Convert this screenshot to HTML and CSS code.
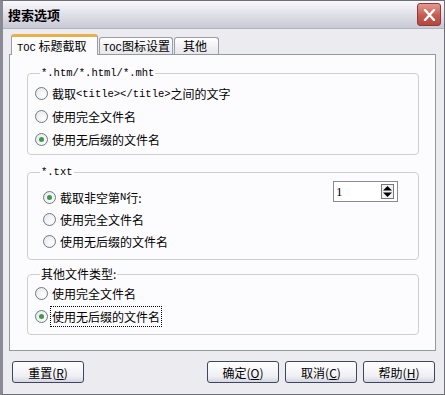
FILE: index.html
```html
<!DOCTYPE html>
<html lang="zh-CN">
<head>
    <meta charset="UTF-8">
    <title>搜索选项</title>
    <link rel="stylesheet" href="styles.css">
</head>
<body>
    <div class="window">
        <div class="titlebar">
            <span class="title">搜索选项</span>
            <span class="close">
                <svg width="13" height="12" viewBox="0 0 13 12">
                    <path d="M2 1 L11 11 M11 1 L2 11" stroke="#fff" stroke-width="2.4" stroke-linecap="round"/>
                </svg>
            </span>
        </div>
        <div class="content">
            <div class="tabs">
                <div class="tab active"><span class="en">TOC</span> 标题截取</div>
                <div class="tab t2"><span class="en">TOC</span>图标设置</div>
                <div class="tab t3">其他</div>
            </div>
            <div class="panel">
                <fieldset class="group g1">
                    <legend class="en">*.htm/*.html/*.mht</legend>
                    <div class="row"><span class="radio"></span>截取<span class="en">&lt;title&gt;&lt;/title&gt;</span>之间的文字</div>
                    <div class="row"><span class="radio"></span>使用完全文件名</div>
                    <div class="row"><span class="radio checked"></span>使用无后缀的文件名</div>
                </fieldset>
                <fieldset class="group g2">
                    <legend class="en">*.txt</legend>
                    <div class="row">
                        <span class="radio checked"></span>截取非空第<span class="en">N</span>行:
                        <span class="spin">
                            <span class="spin-val">1</span>
                            <span class="spin-btn">
                                <svg width="11" height="13" viewBox="0 0 11 13">
                                    <path d="M5.5 1 L10 5.5 L1 5.5 Z" fill="#000"/>
                                    <path d="M1 7.5 L10 7.5 L5.5 12 Z" fill="#000"/>
                                </svg>
                            </span>
                        </span>
                    </div>
                    <div class="row"><span class="radio"></span>使用完全文件名</div>
                    <div class="row"><span class="radio"></span>使用无后缀的文件名</div>
                </fieldset>
                <fieldset class="group g3">
                    <legend>其他文件类型:</legend>
                    <div class="row"><span class="radio"></span>使用完全文件名</div>
                    <div class="row"><span class="radio checked"></span><span class="focus">使用无后缀的文件名</span></div>
                </fieldset>
            </div>
            <div class="buttons">
                <button class="btn">重置(<u>R</u>)</button>
                <div class="right">
                    <button class="btn">确定(<u>O</u>)</button>
                    <button class="btn">取消(<u>C</u>)</button>
                    <button class="btn">帮助(<u>H</u>)</button>
                </div>
            </div>
        </div>
    </div>
</body>
</html>
```

FILE: styles.css
```css
body {
    margin: 0;
    font-family: "Noto Sans CJK SC", "Liberation Sans", sans-serif;
    font-size: 12px;
    color: #000;
}
.window {
    width: 445px;
    height: 395px;
    box-sizing: border-box;
    border: 1px solid #6f6f7a;
    border-left: 3px solid #8a8a96;
    background: #ecebf0;
}
.titlebar {
    height: 27px;
    display: flex;
    align-items: center;
    justify-content: space-between;
    padding: 0 3px 0 5px;
    background: linear-gradient(#fafafc, #e2e2ea 45%, #c9c9d6);
    border-bottom: 1px solid #b4b4c0;
}
.title {
    font-weight: bold;
    font-size: 13px;
}
.close {
    width: 22px;
    height: 21px;
    border: 1px solid #8c3a3a;
    border-radius: 3px;
    background: linear-gradient(#e49a90, #c65a52 55%, #b4463f);
    display: flex;
    align-items: center;
    justify-content: center;
}
.content {
    padding: 5px 8px 0 6px;
}
.en {
    font-family: "Liberation Mono", monospace;
    font-size: 10.5px;
}
.tabs {
    display: flex;
    align-items: flex-end;
    height: 20px;
    padding-left: 2px;
    gap: 1px;
}
.tab {
    box-sizing: border-box;
    height: 17px;
    border: 1px solid #9c9ca8;
    border-bottom: none;
    border-radius: 3px 3px 0 0;
    background: linear-gradient(#ffffff, #e6e6ec);
    padding: 0 5px;
    line-height: 16px;
    white-space: nowrap;
}
.tab.active {
    width: 87px;
    height: 21px;
    margin-bottom: -1px;
    background: #fcfcfe;
    border-top: 3px solid #e8b04a;
    line-height: 17px;
    position: relative;
    z-index: 1;
}
.tab.t2 {
    width: 74px;
    padding: 0 3px;
}
.tab.t3 {
    width: 45px;
    padding-left: 8px;
}
.panel {
    height: 297px;
    box-sizing: border-box;
    border: 1px solid #919b9c;
    background: #fcfcfe;
    padding: 11px 16px 0 17px;
}
.group {
    margin: 0;
    border: 1px solid #d0d0c8;
    border-radius: 4px;
    padding: 2px 8px 3px 7px;
    min-width: 0;
}
.group legend {
    padding: 0 1px;
    margin-left: 5px;
    line-height: 14px;
}
.g2 {
    margin-top: 10px;
    padding: 7px 8px 7px 7px;
}
.g2 .row {
    padding-left: 8px;
}
.g3 {
    margin-top: 7px;
    padding-top: 1px;
    padding-bottom: 6px;
}
.row {
    height: 23px;
    display: flex;
    align-items: center;
    white-space: nowrap;
}
.g2 .row {
    height: 22px;
}
.radio {
    width: 11px;
    height: 11px;
    border: 1px solid #6d7a86;
    border-radius: 50%;
    background: radial-gradient(circle at 65% 65%, #ffffff, #e4e4e8);
    margin-right: 4px;
    display: flex;
    align-items: center;
    justify-content: center;
    flex: none;
}
.radio.checked::after {
    content: "";
    width: 5px;
    height: 5px;
    border-radius: 50%;
    background: #3c9a48;
}
.focus {
    outline: 1px dotted #000;
    outline-offset: 1px;
}
.spin {
    margin-left: auto;
    margin-right: 12px;
    align-self: flex-start;
    margin-top: -5px;
    width: 65px;
    height: 21px;
    box-sizing: border-box;
    border: 1px solid #8a8a8a;
    background: #fff;
    display: flex;
    align-items: center;
    justify-content: space-between;
    padding: 0 3px 0 2px;
}
.spin-val {
    font-family: "Liberation Serif", serif;
    font-size: 13px;
}
.spin-btn {
    width: 13px;
    height: 15px;
    border: 1px solid #777;
    box-sizing: border-box;
    display: flex;
    align-items: center;
    justify-content: center;
    background: #f2f2f2;
}
.buttons {
    display: flex;
    justify-content: space-between;
    padding: 10px 1px 0 3px;
}
.right {
    display: flex;
    gap: 6px;
}
.btn {
    width: 72px;
    height: 22px;
    border: 1px solid #3c4660;
    border-radius: 3px;
    background: linear-gradient(#ffffff, #f0f0f4 70%, #d6d6e2);
    font-family: "Noto Sans CJK SC", sans-serif;
    font-size: 12px;
    padding: 0;
    color: #000;
}
.btn u {
    text-decoration: underline;
}
```
